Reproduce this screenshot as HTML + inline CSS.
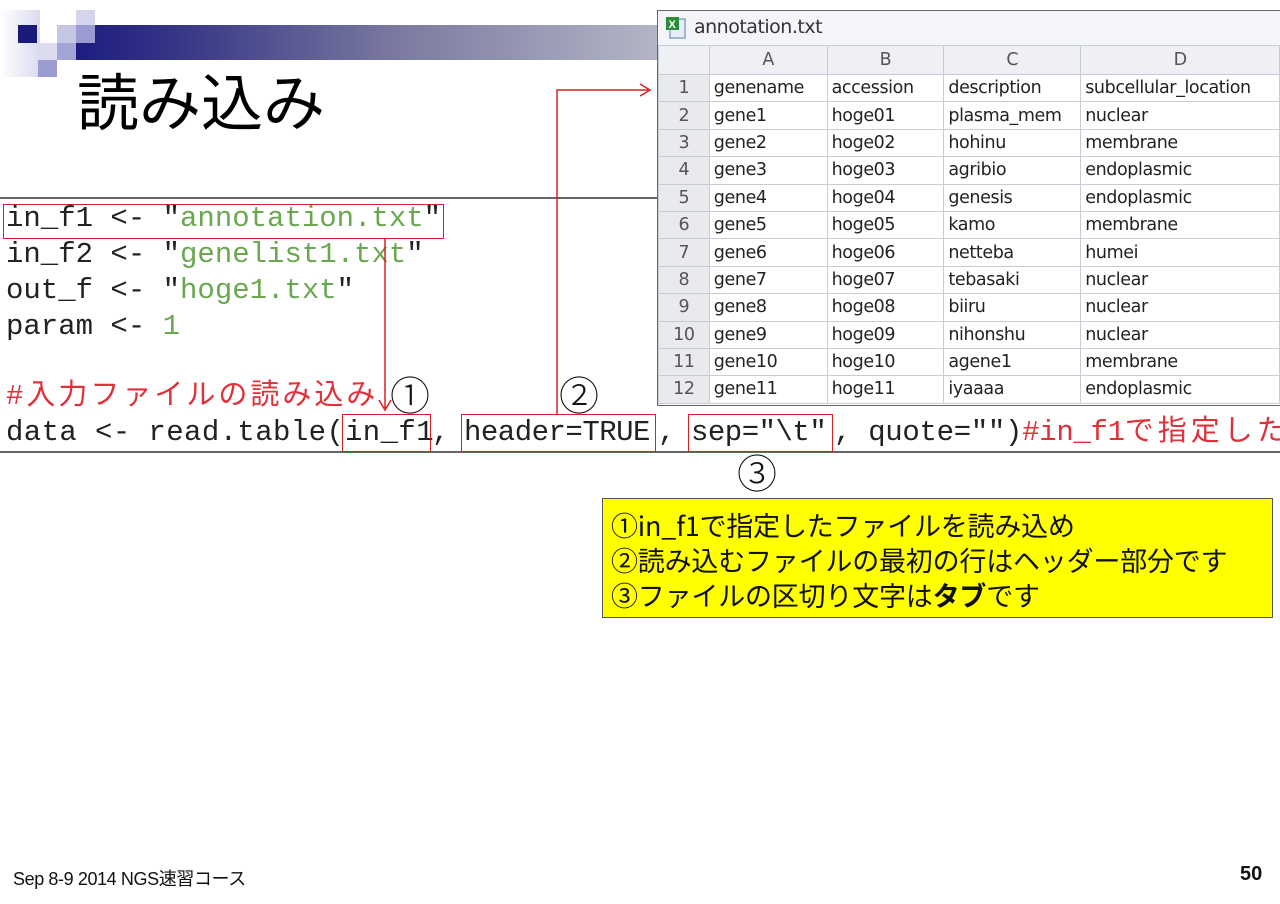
<!DOCTYPE html>
<html><head><meta charset="utf-8"><style>
body{margin:0;width:1280px;height:904px;background:#fff;position:relative;overflow:hidden;font-family:"Liberation Sans","Noto Sans CJK JP",sans-serif}
.a{position:absolute}
.code{position:absolute;font-family:"Liberation Mono","Noto Sans CJK JP",monospace;font-size:29px;line-height:36px;color:#222;white-space:pre;letter-spacing:0.4px}
.g{color:#6aa84f}.r{color:#e0303a}
.rb{position:absolute;border:1.5px solid #d82020;box-sizing:border-box}
.sheet{position:absolute;left:657px;top:10px;width:623px;height:396px;border:1.5px solid #666;box-sizing:border-box;background:#fff;border-right:none}
table{border-collapse:collapse;position:absolute;left:0;top:34px;font-family:"DejaVu Sans",sans-serif;font-size:17.5px;color:#222;letter-spacing:-0.4px}
td{border:1px solid #c8ccd4;height:26.4px;padding:0 4px;white-space:nowrap;overflow:hidden}
td.n{background:#e8eaee;text-align:center;color:#555;width:42px}
tr.h td{background:#eef0f3;text-align:center;color:#555;height:28px}
.circ{position:absolute;font-size:40px;color:#111;font-family:"Noto Sans CJK JP",sans-serif;line-height:40px;font-weight:300}
</style></head><body>
<div class="a" style="left:0;top:10px;width:40px;height:67px;background:linear-gradient(90deg,#fff,#dadbef)"></div>
<div class="a" style="left:76px;top:25px;width:584px;height:35px;background:linear-gradient(90deg,#1c1c80,#3a3a88 20%,#7a7aa0 55%,#b4b6c6)"></div>
<div class="a" style="left:18px;top:25px;width:19px;height:18px;background:#1a1a7c"></div>
<div class="a" style="left:57px;top:25px;width:19px;height:18px;background:#c5c6e4"></div>
<div class="a" style="left:76px;top:10px;width:19px;height:15px;background:#d4d5ec"></div>
<div class="a" style="left:76px;top:25px;width:19px;height:18px;background:#9a9bd0"></div>
<div class="a" style="left:38px;top:43px;width:19px;height:17px;background:#dcdcf0"></div>
<div class="a" style="left:57px;top:43px;width:19px;height:17px;background:#a3a4d6"></div>
<div class="a" style="left:38px;top:60px;width:19px;height:17px;background:#9b9cd2"></div>
<div class="a" style="left:77px;top:60px;font-size:62px;color:#000;font-family:'Noto Sans CJK JP',sans-serif;line-height:76px">読み込み</div>

<div class="a" style="left:0;top:197px;width:657px;height:1.5px;background:#666"></div>
<div class="a" style="left:0;top:451px;width:1280px;height:1.5px;background:#666"></div>
<div class="code" style="left:6px;top:201px;letter-spacing:0px">in_f1 &lt;- "<span class="g">annotation.txt</span>"</div>
<div class="code" style="left:6px;top:237px;letter-spacing:0px">in_f2 &lt;- "<span class="g">genelist1.txt</span>"</div>
<div class="code" style="left:6px;top:273px;letter-spacing:0px">out_f &lt;- "<span class="g">hoge1.txt</span>"</div>
<div class="code" style="left:6px;top:309px;letter-spacing:0px">param &lt;- <span class="g">1</span></div>
<div class="code r" style="left:6px;top:379px;letter-spacing:3px">#入力ファイルの読み込み</div>
<div class="code" style="left:6px;top:415px">data &lt;- read.table(</div>
<div class="code" style="left:345px;top:415px">in_f1</div>
<div class="code" style="left:432px;top:415px">,</div>
<div class="code" style="left:464px;top:415px;letter-spacing:-0.5px">header=TRUE</div>
<div class="code" style="left:658px;top:415px">,</div>
<div class="code" style="left:691px;top:415px;letter-spacing:-0.5px">sep="\t"</div>
<div class="code" style="left:834px;top:415px;letter-spacing:-0.3px">, quote="")<span class="r">#in_f1<span style="letter-spacing:4px">で指定した</span></span></div>

<div class="rb" style="left:3px;top:204px;width:441px;height:35px"></div>
<div class="rb" style="left:342px;top:414px;width:89px;height:38px"></div>
<div class="rb" style="left:461px;top:414px;width:195px;height:38px"></div>
<div class="rb" style="left:688px;top:414px;width:145px;height:38px"></div>

<svg class="a" style="left:0;top:0" width="1280" height="904">
<path d="M385 239V408M379 400L385 410L391 400" stroke="#d82020" stroke-width="1.5" fill="none"/>
<path d="M557 414V90H648M640 84L650 90L640 96" stroke="#d82020" stroke-width="1.5" fill="none"/>
</svg>
<div class="circ" style="left:390px;top:373px">①</div>
<div class="circ" style="left:559px;top:373px">②</div>
<div class="circ" style="left:737px;top:451px">③</div>

<div class="sheet">
<div class="a" style="left:0;top:0;width:622px;height:34px;background:#f3f5f8"></div>
<svg class="a" style="left:7px;top:5px" width="22" height="24"><rect x="5" y="3" width="15" height="19" fill="#e8eef8" stroke="#5580b0"/><rect x="1" y="1" width="13" height="13" fill="#2e8b3a"/><text x="3.5" y="12" font-size="11" fill="#fff" font-family="Liberation Sans" font-weight="bold">X</text></svg>
<div class="a" style="left:36px;top:5px;font-size:19px;color:#333;font-family:'DejaVu Sans',sans-serif;letter-spacing:-0.5px">annotation.txt</div>
<table>
<tr class="h"><td class="n" style="width:42px"></td><td style="width:109px">A</td><td style="width:108px">B</td><td style="width:128px">C</td><td style="width:190px">D</td></tr>
<tr><td class="n">1</td><td>genename</td><td>accession</td><td>description</td><td>subcellular_location</td></tr>
<tr><td class="n">2</td><td>gene1</td><td>hoge01</td><td>plasma_mem</td><td>nuclear</td></tr>
<tr><td class="n">3</td><td>gene2</td><td>hoge02</td><td>hohinu</td><td>membrane</td></tr>
<tr><td class="n">4</td><td>gene3</td><td>hoge03</td><td>agribio</td><td>endoplasmic</td></tr>
<tr><td class="n">5</td><td>gene4</td><td>hoge04</td><td>genesis</td><td>endoplasmic</td></tr>
<tr><td class="n">6</td><td>gene5</td><td>hoge05</td><td>kamo</td><td>membrane</td></tr>
<tr><td class="n">7</td><td>gene6</td><td>hoge06</td><td>netteba</td><td>humei</td></tr>
<tr><td class="n">8</td><td>gene7</td><td>hoge07</td><td>tebasaki</td><td>nuclear</td></tr>
<tr><td class="n">9</td><td>gene8</td><td>hoge08</td><td>biiru</td><td>nuclear</td></tr>
<tr><td class="n">10</td><td>gene9</td><td>hoge09</td><td>nihonshu</td><td>nuclear</td></tr>
<tr><td class="n">11</td><td>gene10</td><td>hoge10</td><td>agene1</td><td>membrane</td></tr>
<tr><td class="n">12</td><td>gene11</td><td>hoge11</td><td>iyaaaa</td><td>endoplasmic</td></tr>
</table>
</div>

<div class="a" style="left:602px;top:498px;width:671px;height:120px;background:#ffff00;border:1.5px solid #555;box-sizing:border-box;padding:8px 0 0 8px;font-size:27px;line-height:35px;color:#111;font-family:'Noto Sans CJK JP',sans-serif;letter-spacing:-0.2px;white-space:nowrap">
①in_f1で指定したファイルを読み込め<br>②読み込むファイルの最初の行はヘッダー部分です<br>③ファイルの区切り文字は<b>タブ</b>です</div>

<div class="a" style="left:13px;top:865px;font-size:18px;color:#111;letter-spacing:-0.4px">Sep 8-9 2014 NGS速習コース</div>
<div class="a" style="left:1240px;top:863px;font-size:20px;font-weight:bold;color:#111">50</div>
</body></html>
